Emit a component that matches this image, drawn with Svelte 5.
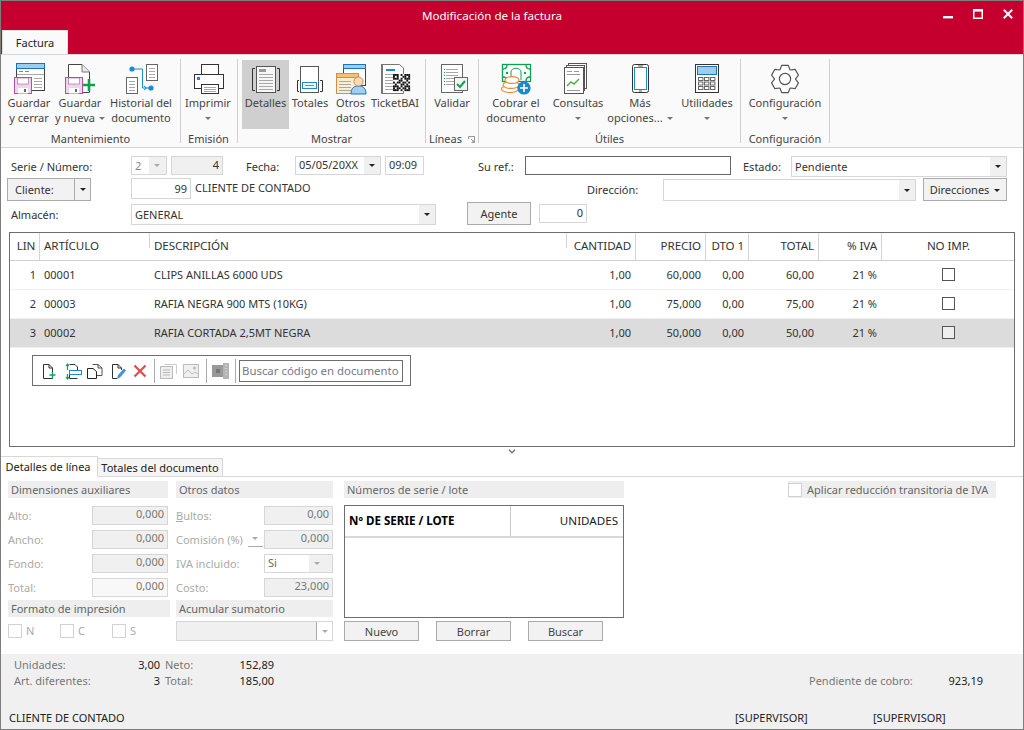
<script>
  const cols = [
    { t: 'LIN', w: 30, a: 'c' }, { t: 'ARTÍCULO', w: 110, a: 'l' }, { t: 'DESCRIPCIÓN', w: 417, a: 'l' },
    { t: 'CANTIDAD', w: 69, a: 'r' }, { t: 'PRECIO', w: 70, a: 'r' }, { t: 'DTO 1', w: 43, a: 'r' },
    { t: 'TOTAL', w: 70, a: 'r' }, { t: '% IVA', w: 63, a: 'r' }, { t: 'NO IMP.', w: 133, a: 'c' }
  ];
  const rows = [
    ['1', '00001', 'CLIPS ANILLAS 6000 UDS', '1,00', '60,000', '0,00', '60,00', '21 %'],
    ['2', '00003', 'RAFIA NEGRA 900 MTS (10KG)', '1,00', '75,000', '0,00', '75,00', '21 %'],
    ['3', '00002', 'RAFIA CORTADA 2,5MT NEGRA', '1,00', '50,000', '0,00', '50,00', '21 %']
  ];
  const gridCols = cols.map((c) => c.w + 'px').join(' ');
  const qr = [
    [1,1,1,0,1,0,1,1,1],[1,0,1,0,0,1,1,0,1],[1,1,1,0,1,0,1,1,1],[0,0,0,1,1,0,0,1,0],[1,0,1,1,0,1,1,0,1],
    [0,1,0,0,1,1,0,1,0],[1,1,1,0,1,0,1,1,1],[1,0,1,1,0,1,1,0,1],[1,1,1,0,1,0,1,1,1]
  ];
  const gear = (() => {
    let d = '';
    const R = 14, r = 10.5, n = 6, cx = 20, cy = 19;
    for (let i = 0; i < n; i++) {
      const a = (i * 2 * Math.PI) / n - Math.PI / 2;
      const pts = [[r, -0.5], [R, -0.24], [R, 0.24], [r, 0.5]];
      pts.forEach(([q, o], j) => {
        const x = (cx + q * Math.cos(a + o)).toFixed(1);
        const y = (cy + q * Math.sin(a + o)).toFixed(1);
        d += (i === 0 && j === 0 ? 'M' : 'L') + x + ' ' + y + ' ';
      });
    }
    return d + 'Z';
  })();
</script>

{#snippet floppy()}
  <rect x="5.5" y="17.5" width="17" height="16" fill="#ecd6ea" stroke="#a8559f" />
  <rect x="8.5" y="18" width="11" height="6" fill="#fff" stroke="#a8559f" stroke-width=".6" />
  <rect x="9" y="28" width="10" height="5.5" fill="#fff" />
  <rect x="15" y="29" width="2" height="3" fill="#666" />
{/snippet}
{#snippet lines(x, y, w, n, step = 3)}
  {#each Array(n) as _, i}<rect {x} y={y + i * step} width={w} height="1" fill="#a8a8a8" />{/each}
{/snippet}

{#snippet icoSaveClose2()}
  <svg class="ico" viewBox="0 0 40 36"><rect x="7.5" y="3.5" width="28" height="27" fill="#fff" stroke="#444" /><rect x="7.5" y="3.5" width="28" height="5" fill="#9fcbed" stroke="#1b75bc" /><rect x="10" y="11" width="4" height="1" fill="#888" /><rect x="16" y="11" width="4" height="1" fill="#888" />{@render lines(8, 14, 27, 1)}{@render lines(25, 18, 8, 4)}{@render floppy()}</svg>
{/snippet}
{#snippet icoSaveNew()}
  <svg class="ico" viewBox="0 0 40 36"><path d="M8.5 4.5H22L29.5 12V32.5H8.5Z" fill="#fff" stroke="#444" /><path d="M22 4.5V12H29.5" fill="#e8e8e8" stroke="#777" />{@render floppy()}<path d="M29 19V31M23 25H35" stroke="#0fa04f" stroke-width="2.6" fill="none" /></svg>
{/snippet}
{#snippet icoHist()}
  <svg class="ico" viewBox="0 0 40 36"><rect x="25.5" y="4.5" width="11" height="16" fill="#fff" stroke="#666" />{@render lines(28, 8, 6, 4)}<rect x="5.5" y="17.5" width="11" height="16" fill="#fff" stroke="#666" />{@render lines(8, 21, 6, 4)}<path d="M11 9H21.5V28H30" fill="none" stroke="#1b8ad0" /><circle cx="11" cy="9" r="2.6" fill="#1b8ad0" /><circle cx="30" cy="28" r="2.6" fill="#1b8ad0" /><path d="M23 26L25.5 28L23 30" fill="none" stroke="#1b8ad0" /></svg>
{/snippet}
{#snippet icoPrint()}
  <svg class="ico" viewBox="0 0 40 36"><rect x="13.5" y="4.5" width="17" height="10" fill="#fff" stroke="#333" /><rect x="6.5" y="14.5" width="29" height="14" fill="#fff" stroke="#333" /><rect x="9" y="17" width="3" height="3" fill="#1b8ad0" /><rect x="13.5" y="24.5" width="17" height="9" fill="#fff" stroke="#333" />{@render lines(16, 27, 12, 3, 2)}</svg>
{/snippet}
{#snippet icoDet()}
  <svg class="ico" viewBox="0 0 40 36"><path d="M9 8.5H6.5V30.5H9M31 8.5H33.5V30.5H31" fill="none" stroke="#333" /><rect x="10.5" y="6.5" width="19" height="26" fill="#f6f6f6" stroke="#555" /><rect x="13" y="9" width="7" height="3" fill="#999" />{@render lines(13, 14, 14, 6)}</svg>
{/snippet}
{#snippet icoTot()}
  <svg class="ico" viewBox="0 0 40 36"><rect x="10.5" y="6.5" width="18" height="26" fill="#fff" stroke="#555" /><path d="M9 20.5H7.5V31.5H9M30 20.5H32.5V31.5H30" fill="none" stroke="#333" /><rect x="12.5" y="22.5" width="14" height="6" fill="#eef5fb" stroke="#1b8ad0" /><rect x="15" y="25" width="9" height="1" fill="#888" /></svg>
{/snippet}
{#snippet icoOtros()}
  <svg class="ico" viewBox="0 0 40 36"><rect x="12.5" y="4.5" width="22" height="21" fill="#fff" stroke="#444" /><rect x="12.5" y="4.5" width="22" height="4" fill="#9fcbed" stroke="#1b75bc" /><rect x="5.5" y="13.5" width="22" height="20" fill="#fbeed0" stroke="#e08a3c" /><rect x="5.5" y="13.5" width="22" height="4" fill="#f6c078" stroke="#e08a3c" />{@render lines(8, 21, 12, 4)}<path d="M20 34C20 28 23 26 27.5 26C32 26 35 28 35 34Z" fill="#a6cdeb" stroke="#1b75bc" /><circle cx="27.5" cy="21.5" r="4.6" fill="#f9d9b8" stroke="#c58f60" /></svg>
{/snippet}
{#snippet icoTicket()}
  <svg class="ico" viewBox="0 0 40 36"><path d="M6.5 4.5H24.5L28.5 8V33.5H6.5Z" fill="#fff" stroke="#777" /><rect x="6" y="4" width="2" height="29" fill="#777" /><rect x="11" y="9" width="9" height="2" fill="#1b8ad0" />{@render lines(10, 14, 8, 6)}<rect x="18" y="14" width="17" height="17" fill="#fff" />{#each qr as row, y}{#each row as v, x}{#if v}<rect x={18 + x * 1.9} y={14 + y * 1.9} width="1.9" height="1.9" fill="#111" />{/if}{/each}{/each}</svg>
{/snippet}
{#snippet icoValid()}
  <svg class="ico" viewBox="0 0 40 36"><rect x="9.5" y="4.5" width="21" height="28" fill="#fff" stroke="#666" />{#each Array(6) as _, i}<rect x="12" y={9 + i * 3} width="1" height="1" fill="#12a150" /><rect x="14" y={9 + i * 3} width="12" height="1" fill="#a8a8a8" />{/each}<rect x="22.5" y="17.5" width="13" height="13" fill="#f4f4f4" stroke="#666" /><path d="M25 24L28 27L33 21" fill="none" stroke="#12a150" stroke-width="2" /></svg>
{/snippet}
{#snippet icoCobrar()}
  <svg class="ico" viewBox="0 0 40 36"><rect x="6.5" y="4.5" width="28" height="17" fill="#fff" stroke="#0fa04f" stroke-width="1.3" /><path d="M15 20V12C15 7 25 7 25 12V20" fill="none" stroke="#0fa04f" /><path d="M7 9C10 9 11 7 11 5M34 9C31 9 30 7 30 5M7 17C10 17 11 19 11 21M34 17C31 17 30 19 30 21" fill="none" stroke="#0fa04f" stroke-width="1.3" /><circle cx="11" cy="13" r="1.2" fill="#0fa04f" /><circle cx="29" cy="13" r="1.2" fill="#0fa04f" /><g fill="#fff" stroke="#e98a3a" stroke-width="1.1"><ellipse cx="14" cy="29" rx="8.5" ry="3.6" /><ellipse cx="15" cy="25" rx="8" ry="3.4" /><ellipse cx="16" cy="20" rx="7" ry="3.4" /></g><circle cx="28" cy="28" r="6.6" fill="#1f88c9" /><path d="M28 24V32M24 28H32" stroke="#fff" stroke-width="1.6" /></svg>
{/snippet}
{#snippet icoCons()}
  <svg class="ico" viewBox="0 0 40 36"><rect x="10.5" y="3.5" width="18" height="25" fill="#fff" stroke="#555" /><rect x="8.5" y="5.5" width="18" height="25" fill="#fff" stroke="#555" /><rect x="6.5" y="7.5" width="19" height="26" fill="#fff" stroke="#555" /><rect x="9" y="11" width="5" height="1" fill="#999" /><rect x="16" y="11" width="5" height="1" fill="#999" /><rect x="9" y="14" width="13" height="1" fill="#999" /><path d="M9 26L13 22L16 24L21 19" fill="none" stroke="#4cae3c" stroke-width="1.4" /><rect x="9" y="30" width="13" height="1" fill="#999" /></svg>
{/snippet}
{#snippet icoMas()}
  <svg class="ico" viewBox="0 0 40 36"><rect x="12.5" y="4.5" width="16" height="28" rx="2" fill="#fff" stroke="#333" /><rect x="14.5" y="7.5" width="12" height="22" fill="#fff" stroke="#1b8ad0" /><rect x="18" y="5.5" width="5" height="1" fill="#555" /><rect x="19" y="30.5" width="3" height="1" fill="#555" /></svg>
{/snippet}
{#snippet icoUtil()}
  <svg class="ico" viewBox="0 0 40 36"><rect x="8.5" y="4.5" width="23" height="28" fill="#fff" stroke="#333" /><rect x="10.5" y="6.5" width="19" height="8" fill="#9fcbed" stroke="#1b75bc" />{#each [0, 1, 2] as y}{#each [0, 1, 2] as x}<rect x={11.5 + x * 6} y={17.5 + y * 4.5} width="4.4" height="3" fill="#fff" stroke="#666" />{/each}{/each}</svg>
{/snippet}
{#snippet icoConf()}
  <svg class="ico" viewBox="0 0 40 36"><path d={gear} fill="#fff" stroke="#555" stroke-width="1.2" stroke-linejoin="round" /><circle cx="20" cy="19" r="5.6" fill="#fff" stroke="#555" stroke-width="1.2" /></svg>
{/snippet}

{#snippet rb(w, a, b, caret, ic, on = false)}
  <div class="rb" class:on style="width:{w}px">
    {@render ic()}
    <span class="l">{a}</span>
    <span class="l">{b}{#if caret}<i class="car" class:alone={!b}></i>{/if}</span>
  </div>
{/snippet}
{#snippet combo(cls, text)}
  <div class="combo {cls}"><span class="ctext">{text}</span><span class="arrow"><i class="blk"></i></span></div>
{/snippet}

<div class="win">
  <header class="title">
    <div class="caption">
      <span class="cap">Modificación de la factura</span>
      <div class="wc">
        <svg width="10" height="4" viewBox="0 0 10 4"><rect y="1" width="10" height="2.4" fill="#fff" /></svg>
        <svg width="10" height="10" viewBox="0 0 10 10"><rect x=".75" y="1.25" width="8.5" height="8" fill="none" stroke="#fff" stroke-width="1.5" /><rect x="0" y="0" width="10" height="2.6" fill="#fff" /></svg>
        <svg width="10" height="10" viewBox="0 0 10 10"><path d="M.8 .8L9.2 9.2M9.2 .8L.8 9.2" stroke="#fff" stroke-width="2" /></svg>
      </div>
    </div>
    <div class="tab">Factura</div>
  </header>

  <section class="ribbon">
    <div class="grp g1"><div class="btns">
      {@render rb(48, 'Guardar', 'y cerrar', false, icoSaveClose2)}
      {@render rb(54, 'Guardar', 'y nueva', true, icoSaveNew)}
      {@render rb(68, 'Historial del', 'documento', false, icoHist)}
    </div><div class="gl">Mantenimiento</div></div>
    <div class="grp g2"><div class="btns">{@render rb(48, 'Imprimir', '', true, icoPrint)}</div><div class="gl">Emisión</div></div>
    <div class="grp g3"><div class="btns">
      {@render rb(47, 'Detalles', '', false, icoDet, true)}
      {@render rb(42, 'Totales', '', false, icoTot)}
      {@render rb(39, 'Otros', 'datos', false, icoOtros)}
      {@render rb(50, 'TicketBAI', '', false, icoTicket)}
    </div><div class="gl">Mostrar</div></div>
    <div class="grp g4"><div class="btns">{@render rb(44, 'Validar', '', false, icoValid)}</div><div class="gl">Líneas<svg class="launch" width="7" height="7" viewBox="0 0 7 7"><path d="M.5 3V.5H6.5V6.5H3.5M3 3L6 6M6 4V6H4" fill="none" stroke="#999" /></svg></div></div>
    <div class="grp g5"><div class="btns">
      {@render rb(66, 'Cobrar el', 'documento', false, icoCobrar)}
      {@render rb(58, 'Consultas', '', true, icoCons)}
      {@render rb(66, 'Más', 'opciones...', true, icoMas)}
      {@render rb(68, 'Utilidades', '', true, icoUtil)}
    </div><div class="gl">Útiles</div></div>
    <div class="grp g6"><div class="btns">{@render rb(80, 'Configuración', '', true, icoConf)}</div><div class="gl">Configuración</div></div>
  </section>

  <section class="form">
    <div class="frow r1">
      <span class="lb lb-serie">Serie / Número:</span>
      <div class="combo dis f-serie"><span class="ctext w">2</span><span class="arrow"><i class="gry"></i></span></div>
      <div class="inp dis f-num">4</div>
      <span class="lb lb-fecha">Fecha:</span>
      <div class="combo f-date"><span class="ctext">05/05/20XX</span><span class="arrow"><i class="blk"></i></span></div>
      <div class="inp left f-time">09:09</div>
      <span class="lb lb-ref">Su ref.:</span>
      <div class="inp dark f-ref"></div>
      <span class="lb lb-est">Estado:</span>
      {@render combo('f-est', 'Pendiente')}
    </div>
    <div class="frow r2">
      <div class="btn split f-cli"><span class="sp1">Cliente:</span><span class="sp2"><i class="blk"></i></span></div>
      <div class="inp f-cn">99</div>
      <span class="lb lb-cn">CLIENTE DE CONTADO</span>
      <span class="lb lb-dir">Dirección:</span>
      {@render combo('f-dir', '')}
      <div class="btn f-dirs">Direcciones<i class="blk dirs-car"></i></div>
    </div>
    <div class="frow r3">
      <span class="lb lb-alm">Almacén:</span>
      {@render combo('f-alm', 'GENERAL')}
      <div class="btn f-age">Agente</div>
      <div class="inp f-an">0</div>
    </div>
  </section>

  <section class="table">
    <div class="thead" style="grid-template-columns:{gridCols}">
      {#each cols as c}<div class="th {c.a}">{c.t}</div>{/each}
    </div>
    {#each rows as r, i}
      <div class="tr" class:sel={i === 2} style="grid-template-columns:{gridCols}">
        <div class="td lin">{r[0]}</div>
        <div class="td l">{r[1]}</div>
        <div class="td l">{r[2]}</div>
        <div class="td r">{r[3]}</div>
        <div class="td r">{r[4]}</div>
        <div class="td r">{r[5]}</div>
        <div class="td r">{r[6]}</div>
        <div class="td r">{r[7]}</div>
        <div class="td c"><span class="chk"></span></div>
      </div>
    {/each}
    <div class="tools">
      <svg width="14" height="18" viewBox="0 0 14 18"><path d="M1.5 2.5H7L10.5 6V16.5H1.5Z" fill="#fff" stroke="#333" /><path d="M7 2.5V6H10.5" fill="none" stroke="#333" /><path d="M10.5 10V16M7.5 13H13.5" stroke="#12a150" stroke-width="1.3" /></svg>
      <svg class="t2" width="17" height="18" viewBox="0 0 17 18"><path d="M4.5 2.5H10L12.5 5V8M4.5 13V16.5H12.5" fill="none" stroke="#333" /><rect x="4.5" y="8.5" width="12" height="4" fill="#fff" stroke="#1b8ad0" /><path d="M2.5 2V8M1 4L2.5 2L4 4M2.5 12V17M1 15L2.5 17L4 15" fill="none" stroke="#12a150" stroke-width="1.2" /></svg>
      <svg class="t3" width="17" height="18" viewBox="0 0 17 18"><path d="M6.5 2.5H12L16 6V13.5H11" fill="#fff" stroke="#555" /><path d="M12 2.5V6H16" fill="none" stroke="#555" /><path d="M1.5 6.5H7L10.5 9.5V16.5H1.5Z" fill="#fff" stroke="#222" /></svg>
      <svg class="t4" width="15" height="18" viewBox="0 0 15 18"><path d="M1.5 2.5H7L10.5 6V8M1.5 2.5V16.5H6" fill="none" stroke="#333" /><path d="M7 2.5V6H10.5" fill="none" stroke="#333" /><path d="M6 17L7 13L13 6.5L15 8.5L9 15.5Z" fill="#3f93d6" /></svg>
      <svg class="t5" width="14" height="14" viewBox="0 0 14 14"><path d="M1.5 1.5L12.5 12.5M12.5 1.5L1.5 12.5" stroke="#e64a4a" stroke-width="2.2" /></svg>
      <span class="tsep s1"></span>
      <svg class="t6" width="17" height="16" viewBox="0 0 17 16"><path d="M4.5 1.5H16.5V11" fill="none" stroke="#ccc" /><rect x=".5" y="3.5" width="12" height="12" fill="#eee" stroke="#bbb" /><path d="M3 7H10M3 9.5H10M3 12H10" stroke="#bbb" /></svg>
      <svg class="t7" width="16" height="14" viewBox="0 0 16 14"><rect x=".5" y=".5" width="15" height="13" fill="#f0f0f0" stroke="#bbb" /><path d="M1 10L5 6L9 10L12 8L15 10" fill="none" stroke="#bbb" /><circle cx="11.5" cy="4" r="1.5" fill="#bbb" /></svg>
      <span class="tsep s2"></span>
      <svg class="t8" width="17" height="16" viewBox="0 0 17 16"><rect x="0" y="2" width="12" height="12" fill="#999" /><rect x="4" y="6" width="4" height="4" fill="#777" /><rect x="11" y="0" width="6" height="16" fill="#b5b5b5" /><path d="M14 2V14" stroke="#eee" stroke-dasharray="1 2" /></svg>
      <span class="tsep s3"></span>
      <div class="tsearch">Buscar código en documento</div>
    </div>
  </section>

  <div class="grip"><svg width="8" height="5" viewBox="0 0 8 5"><path d="M1 .8L4 3.8L7 .8" fill="none" stroke="#777" stroke-width="1.4" /></svg></div>

  <div class="tabs">
    <div class="t on">Detalles de línea</div>
    <div class="t off">Totales del documento</div>
  </div>

  <section class="lower">
    <div class="colA">
      <div class="hd">Dimensiones auxiliares</div>
      <div class="fr first"><span>Alto:</span><div class="inp dis d1">0,000</div></div>
      <div class="fr"><span>Ancho:</span><div class="inp dis d1">0,000</div></div>
      <div class="fr"><span>Fondo:</span><div class="inp dis d1">0,000</div></div>
      <div class="fr"><span>Total:</span><div class="inp dis lite d1">0,000</div></div>
      <div class="hd hd2 wide">Formato de impresión</div>
      <div class="chks">
        <label><i></i>N</label><label><i></i>C</label><label><i></i>S</label>
      </div>
    </div>
    <div class="colB">
      <div class="hd">Otros datos</div>
      <div class="fr first"><span><u>B</u>ultos:</span><div class="inp dis d2">0,00</div></div>
      <div class="fr"><span>Comisión (%)</span><span class="mini"><i class="gry"></i></span><div class="inp dis d2">0,000</div></div>
      <div class="fr"><span>IVA incluido:</span><div class="combo dis d2"><span class="ctext w si">Si</span><span class="arrow"><i class="gry"></i></span></div></div>
      <div class="fr"><span>Costo:</span><div class="inp dis d2">23,000</div></div>
      <div class="hd hd2">Acumular sumatorio</div>
      <div class="combo dis big"><span class="ctext"></span><span class="arrow ln"><i class="gry"></i></span></div>
    </div>
    <div class="colC">
      <div class="hd">Números de serie / lote</div>
      <div class="lots">
        <div class="lothead"><b>Nº DE SERIE / LOTE</b><span>UNIDADES</span></div>
      </div>
      <div class="lotbtns"><div class="btn">Nuevo</div><div class="btn">Borrar</div><div class="btn">Buscar</div></div>
    </div>
    <div class="reduc"><i></i>Aplicar reducción transitoria de IVA</div>
  </section>

  <footer class="foot">
    <div class="ft1"><span class="k a">Unidades:</span><span class="v b">3,00</span><span class="k c">Neto:</span><span class="v d">152,89</span></div>
    <div class="ft2"><span class="k a">Art. diferentes:</span><span class="v b">3</span><span class="k c">Total:</span><span class="v d">185,00</span><span class="k e">Pendiente de cobro:</span><span class="v f">923,19</span></div>
    <div class="ft3"><span class="n1">CLIENTE DE CONTADO</span><span class="n2">[SUPERVISOR]</span><span class="n3">[SUPERVISOR]</span></div>
  </footer>
</div>

<style>
  :global(body) { margin: 0; background: #fff; }
  .win { width: 1024px; height: 730px; box-sizing: border-box; border: 1px solid #7d7d7d; display: flex; flex-direction: column; font: 11px/15px "Noto Sans", sans-serif; color: #333; overflow: hidden; background: #fff; }

  .title { height: 53px; background: #c5002f; display: flex; flex-direction: column; flex: none; }
  .caption { height: 29px; position: relative; display: flex; align-items: flex-start; justify-content: center; padding-right: 40px; }
  .cap { color: #fff; font-size: 11.6px; line-height: 30px; }
  .wc { position: absolute; right: 10px; top: 8px; display: flex; align-items: flex-end; gap: 20px; }
  .tab { margin-left: 1px; width: 66px; height: 24px; background: #fafafa; border: 1px solid #e0e0e0; border-bottom: 0; box-sizing: border-box; text-align: center; line-height: 24px; color: #222; }

  .ribbon { height: 94px; box-sizing: border-box; flex: none; background: #fafafa; border-bottom: 1px solid #d4d4d4; border-top: 1px solid #d8d8d8; display: flex; padding-top: 4px; }
  .grp { height: 84px; border-right: 1px solid #d0d0d0; box-sizing: border-box; display: flex; flex-direction: column; }
  .g1 { width: 180px; padding-left: 4px; }
  .g2 { width: 57px; padding-left: 3px; }
  .g3 { width: 188px; padding-left: 4px; }
  .g4 { width: 53px; padding-left: 4px; }
  .g5 { width: 262px; padding-left: 4px; }
  .g6 { width: 89px; padding-left: 4px; }
  .btns { display: flex; height: 71px; padding-top: 1px; box-sizing: border-box; flex: none; }
  .rb { display: flex; flex-direction: column; align-items: center; flex: none; height: 69px; color: #444; }
  .rb.on { background: #cfcfcf; }
  .ico { width: 40px; height: 36px; display: block; flex: none; margin-bottom: -1px; }
  .l { display: block; height: 15px; white-space: nowrap; text-align: center; }
  .gl { text-align: center; line-height: 18px; color: #444; margin-left: -4px; position: relative; white-space: nowrap; }
  .launch { margin-left: 6px; }
  .car { display: inline-block; width: 0; height: 0; border: 3px solid transparent; border-top: 3px solid #777; border-bottom: 0; margin-left: 4px; vertical-align: 2px; }
  .car.alone { margin-left: 0; }

  .form { height: 84px; flex: none; position: relative; padding-top: 8px; box-sizing: border-box; }
  .frow { display: flex; align-items: flex-start; }
  .r1 { height: 22px; }
  .r2 { height: 24px; }
  .lb { white-space: nowrap; color: #333; line-height: 22px; }
  .inp { box-sizing: border-box; border: 1px solid #d6d6d6; background: #fff; height: 19px; line-height: 15px; text-align: right; padding: 0 3px; color: #333; flex: none; }
  .inp.left { text-align: left; }
  .inp.dark { border-color: #666; }
  .inp.dis { background: #f0f0f0; }
  .inp.dis.lite { background: #f8f8f8; }
  .combo { box-sizing: border-box; border: 1px solid #d6d6d6; background: #fff; height: 19px; display: flex; flex: none; line-height: 15px; }
  .ctext { flex: 1; padding-left: 3px; white-space: nowrap; overflow: hidden; }
  .arrow { width: 16px; background: #f0f0f0; display: flex; align-items: center; justify-content: center; flex: none; }
  .combo.dis { background: #f0f0f0; color: #888; }
  .combo.dis .arrow { background: #f0f0f0; }
  .w { background: #fff; flex: none; }
  .blk { display: inline-block; width: 0; height: 0; border: 3px solid transparent; border-top: 3px solid #222; border-bottom: 0; }
  .gry { display: inline-block; width: 0; height: 0; border: 3px solid transparent; border-top: 3px solid #aaa; border-bottom: 0; }
  .btn { box-sizing: border-box; border: 1px solid #aaa; background: #f2f2f2; text-align: center; color: #333; flex: none; }

  .lb-serie { margin-left: 10px; width: 120px; }
  .f-serie { width: 36px; color: #888; line-height: 17px; }
  .f-serie .w { width: 14px; flex: none; padding-left: 3px; }
  .f-num { width: 52px; margin-left: 4px; }
  .lb-fecha { margin-left: 23px; width: 49px; }
  .f-date { width: 86px; }
  .f-time { width: 39px; margin-left: 4px; }
  .lb-ref { margin-left: 54px; width: 47px; }
  .f-ref { width: 206px; }
  .lb-est { margin-left: 12px; width: 48px; }
  .f-est { width: 216px; height: 21px; line-height: 19px; }

  .f-cli { width: 84px; height: 23px; margin-left: 6px; display: flex; line-height: 21px; }
  .sp1 { flex: 1; text-align: left; padding-left: 7px; }
  .sp2 { width: 15px; border-left: 1px solid #aaa; display: flex; align-items: center; justify-content: center; }
  .f-cn { width: 60px; margin-left: 40px; height: 21px; line-height: 19px; }
  .lb-cn { margin-left: 4px; width: 392px; line-height: 20px; }
  .lb-dir { width: 76px; line-height: 24px; }
  .f-dir { width: 253px; height: 22px; margin-top: 1px; }
  .f-dirs { width: 84px; height: 23px; line-height: 21px; margin-left: 7px; }
  .dirs-car { margin-left: 5px; vertical-align: 2px; }

  .lb-alm { margin-left: 10px; width: 120px; line-height: 26px; }
  .f-alm { width: 305px; height: 21px; margin-top: 2px; line-height: 19px; }
  .f-age { width: 64px; height: 23px; line-height: 21px; margin-left: 31px; }
  .f-an { width: 48px; margin-left: 8px; margin-top: 2px; }

  .table { margin: 0 0 0 8px; width: 1006px; height: 215px; flex: none; box-sizing: border-box; border: 1px solid #6e6e6e; display: flex; flex-direction: column; color: #333; }
  .thead { display: grid; height: 28px; flex: none; border-bottom: 1px solid #cfcfcf; box-sizing: border-box; }
  .th { border-right: 1px solid #d4d4d4; line-height: 26px; padding: 0 4px; white-space: nowrap; font-size: 11.6px; letter-spacing: -0.1px; }
  .th:first-child { padding: 0 1px 0 4px; }
  .th:last-child { border-right: 0; }
  .th.c, .td.c { text-align: center; }
  .th.r, .td.r { text-align: right; }
  .th.l, .td.l { text-align: left; }
  .tr { display: grid; height: 29px; flex: none; box-sizing: border-box; border-bottom: 1px solid #efefef; }
  .tr.sel { background: #dcdcdc; }
  .td { line-height: 28px; padding: 0 4px; white-space: nowrap; }
  .td.r { padding-right: 5px; }
  .td.lin { text-align: right; padding-right: 4px; }
  .chk { display: inline-block; width: 13px; height: 13px; border: 1px solid #555; background: #fff; box-sizing: border-box; vertical-align: -2px; }
  .sel .chk { background: #eee; }
  .tools { margin: 7px 0 0 22px; width: 379px; height: 31px; box-sizing: border-box; border: 1px solid #6e6e6e; display: flex; align-items: center; background: #fff; padding-left: 9px; flex: none; }
  .t2 { margin-left: 9px; }
  .t3 { margin-left: 4px; }
  .t4 { margin-left: 8px; }
  .t5 { margin-left: 7px; }
  .tsep { width: 1px; height: 24px; background: #aaa; flex: none; }
  .s1 { margin-left: 7px; }
  .t6 { margin-left: 5px; }
  .t7 { margin-left: 6px; }
  .s2 { margin-left: 7px; }
  .t8 { margin-left: 5px; }
  .s3 { margin-left: 6px; }
  .tsearch { margin-left: 3px; width: 164px; height: 22px; line-height: 19px; box-sizing: border-box; border: 1px solid #6e6e6e; padding-left: 2px; color: #77778a; white-space: nowrap; overflow: hidden; font-size: 11.4px; }

  .grip { height: 9px; flex: none; display: flex; justify-content: center; align-items: center; }
  .tabs { height: 21px; flex: none; display: flex; align-items: flex-end; border-bottom: 1px solid #d8d8d8; box-sizing: border-box; }
  .t { box-sizing: border-box; text-align: center; color: #222; white-space: nowrap; }
  .t.on { width: 97px; height: 21px; line-height: 19px; border: 1px solid #d8d8d8; border-bottom: 1px solid #fff; margin-bottom: -1px; border-left: 0; background: #fff; padding-right: 2px; }
  .t.off { width: 125px; height: 18px; line-height: 18px; border: 1px solid #d8d8d8; border-bottom: 0; background: #f5f5f5; border-left: 0; }

  .lower { height: 177px; flex: none; display: flex; padding: 4px 0 0 7px; box-sizing: border-box; color: #aaa; }
  .hd { background: #eee; height: 17px; line-height: 17px; padding-left: 3px; color: #666; box-sizing: border-box; white-space: nowrap; }
  .hd2 { margin-top: 1px; }
  .colA { width: 160px; }
  .colA .hd.wide { width: 162px; }
  .colB { width: 157px; margin-left: 8px; }
  .colC { width: 280px; margin-left: 11px; }
  .fr { display: flex; justify-content: space-between; align-items: center; height: 24px; white-space: nowrap; }
  .fr.first { margin-top: 5px; }
  .fr > span { line-height: 20px; padding-top: 2px; }
  .fr .inp.dis { color: #777; line-height: 14px; }
  .fr u { text-decoration: underline; }
  .d1 { width: 76px; }
  .d2 { width: 69px; }
  .fr > .mini { width: 15px; height: 15px; padding: 0; line-height: 0; border-bottom: 1px solid #aaa; display: flex; align-items: center; justify-content: center; margin-left: 4px; }
  .fr .si { width: 41px; padding-left: 3px; color: #666; }
  .chks { display: flex; margin-top: 7px; }
  .chks label { width: 52px; display: flex; align-items: center; gap: 4px; line-height: 14px; }
  .chks i, .reduc i { display: block; width: 14px; height: 14px; box-sizing: border-box; border: 1px solid #d2d2d2; background: #fff; }
  .big { width: 157px; height: 20px; margin-top: 4px; }
  .arrow.ln { background: #fff; border-left: 1px solid #aaa; box-sizing: border-box; }
  .combo.dis .arrow.ln { background: #fff; }
  .lots { margin-top: 7px; height: 113px; box-sizing: border-box; border: 1px solid #6e6e6e; background: #fff; }
  .lothead { height: 32px; display: flex; border-bottom: 2px solid #d8d8d8; box-sizing: border-box; line-height: 30px; color: #222; font-size: 11.6px; }
  .lothead b { width: 166px; padding-left: 4px; box-sizing: border-box; border-right: 1px solid #c8c8c8; font-weight: 700; color: #000; white-space: nowrap; }
  .lothead span { flex: 1; text-align: right; padding-right: 5px; }
  .lotbtns { display: flex; gap: 17px; margin-top: 3px; }
  .lotbtns .btn { width: 75px; height: 20px; line-height: 20px; border-color: #aaa; color: #444; }
  .reduc { margin-left: 164px; width: 208px; height: 17px; background: #eee; display: flex; align-items: center; gap: 5px; color: #666; white-space: nowrap; }

  .foot { flex: 1; background: #f0f0f0; position: relative; color: #222; }
  .ft1, .ft2 { position: relative; height: 16px; }
  .ft1 { margin-top: 3px; }
  .foot .k { color: #777; position: absolute; top: 0; white-space: nowrap; }
  .foot .v { position: absolute; top: 0; color: #222; text-align: right; }
  .a { left: 13px; }
  .b { left: 100px; width: 59px; }
  .c { left: 164px; }
  .d { left: 213px; width: 60px; }
  .e { left: 808px; }
  .f { left: 922px; width: 60px; }
  .ft3 { margin-top: 21px; position: relative; height: 15px; }
  .ft3 span { position: absolute; white-space: nowrap; }
  .n1 { left: 8px; }
  .n2 { left: 734px; }
  .n3 { left: 872px; }
</style>
